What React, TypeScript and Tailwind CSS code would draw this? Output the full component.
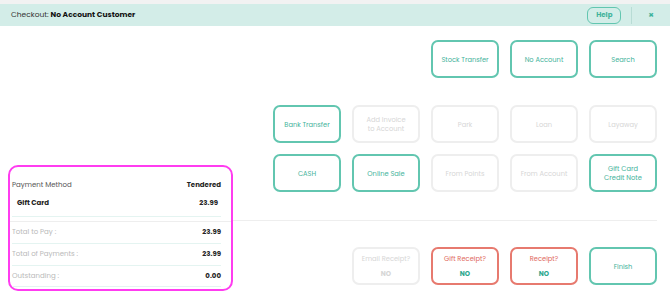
import React from "react";

type Tone = "teal" | "off" | "red";

interface TileProps {
  label: string;
  tone?: Tone;
  sub?: string;
}

const toneClass: Record<Tone, string> = {
  teal: "border-[#62c6b0] text-[#3fb39b]",
  off: "border-[#eeeeee] text-[#d6d6d6]",
  red: "border-[#e77a6f] text-[#e0695d]",
};

const Tile: React.FC<TileProps> = ({ label, tone = "teal", sub }) => {
  return (
    <div
      className={`h-[38px] rounded-[7px] border-2 flex flex-col items-center justify-center text-center text-[6.7px] leading-[9px] ${toneClass[tone]}`}
    >
      {label.split("\n").map((line) => (
        <span key={line}>{line}</span>
      ))}
      {sub && (
        <span
          className={`mt-[6px] font-bold ${tone === "off" ? "text-[#d6d6d6]" : "text-[#2ea78e]"}`}
        >
          {sub}
        </span>
      )}
    </div>
  );
};

const SummaryRow: React.FC<{ label: string; value: string; muted?: boolean; strong?: boolean }> = ({
  label,
  value,
  muted,
  strong,
}) => (
  <div className="h-[12px] flex items-center justify-between text-[7px]">
    <span
      className={muted ? "text-[#b9b9b9]" : strong ? "font-bold text-[#222]" : "text-[#555]"}
    >
      {label}
    </span>
    <span className="font-bold text-[#222]">{value}</span>
  </div>
);

export default function App() {
  return (
    <div
      className="w-[670px] h-[296px] bg-white overflow-hidden flex flex-col"
      style={{ fontFamily: "Poppins, 'Open Sans', sans-serif" }}
    >
      <div className="h-[4px] bg-[#f2f2f2]" />
      <div className="h-[22px] bg-[#d3ede8] flex items-center justify-between pl-[11px] pr-[16px]">
        <div className="text-[7.5px] text-[#333]">
          Checkout: <span className="font-bold text-[#111]">No Account Customer</span>
        </div>
        <div className="flex items-center">
          <button className="w-[34px] h-[17px] rounded-[6px] border border-[#62c6b0] text-[7px] font-bold text-[#3fb39b]">
            Help
          </button>
          <div className="w-px h-[17px] bg-[#b8dcd5] ml-[10px] mr-[16px]" />
          <span className="text-[9px] font-bold text-[#3fb39b] leading-none">×</span>
        </div>
      </div>

      <div className="flex flex-1">
        {/* left: payment summary */}
        <div className="w-[233px] pl-[8px] pt-[139px]">
          <div className="h-[126px] rounded-[10px] border-2 border-[#ff3cf0] pt-[12px]">
            <div className="pl-[2px] pr-[10px]">
              <SummaryRow label="Payment Method" value="Tendered" />
              <div className="mt-[6px] pl-[5px] pr-[3px]">
                <SummaryRow label="Gift Card" value="23.99" strong />
              </div>
            </div>
            <div className="ml-[2px] mr-[10px] mt-[7px] h-px bg-[#e4f4f1]" />
            <div className="mt-[4px] h-px bg-[#eeeeee]" />
            <div className="pl-[2px] pr-[10px]">
              <div className="mt-[4px]">
                <SummaryRow label="Total to Pay :" value="23.99" muted />
              </div>
              <div className="mt-[5px] h-px bg-[#e4f4f1]" />
              <div className="mt-[4px]">
                <SummaryRow label="Total of Payments :" value="23.99" muted />
              </div>
              <div className="mt-[5px] h-px bg-[#e4f4f1]" />
              <div className="mt-[4px]">
                <SummaryRow label="Outstanding :" value="0.00" muted />
              </div>
              <div className="mt-[4px] h-px bg-[#e4f4f1]" />
            </div>
          </div>
        </div>

        {/* right: tender buttons */}
        <div className="flex-1 flex flex-col pr-[13px]">
          <div className="h-[195px] border-b border-[#eeeeee] pt-[14px]">
            <div className="ml-auto w-[384px] grid grid-cols-5 gap-x-[11px]">
              <div className="col-start-3">
                <Tile label="Stock Transfer" />
              </div>
              <Tile label="No Account" />
              <Tile label="Search" />
            </div>
            <div className="ml-auto mt-[27px] w-[384px] grid grid-cols-5 gap-x-[11px] gap-y-[11px]">
              <Tile label="Bank Transfer" />
              <Tile label={"Add Invoice\nto Account"} tone="off" />
              <Tile label="Park" tone="off" />
              <Tile label="Loan" tone="off" />
              <Tile label="Layaway" tone="off" />
              <Tile label="CASH" />
              <Tile label="Online Sale" />
              <Tile label="From Points" tone="off" />
              <Tile label="From Account" tone="off" />
              <Tile label={"Gift Card\nCredit Note"} />
            </div>
          </div>
          <div className="pt-[26px]">
            <div className="ml-auto w-[384px] grid grid-cols-5 gap-x-[11px]">
              <div className="col-start-2">
                <Tile label="Email Receipt?" tone="off" sub="NO" />
              </div>
              <Tile label="Gift Receipt?" tone="red" sub="NO" />
              <Tile label="Receipt?" tone="red" sub="NO" />
              <Tile label="Finish" />
            </div>
          </div>
        </div>
      </div>
    </div>
  );
}
